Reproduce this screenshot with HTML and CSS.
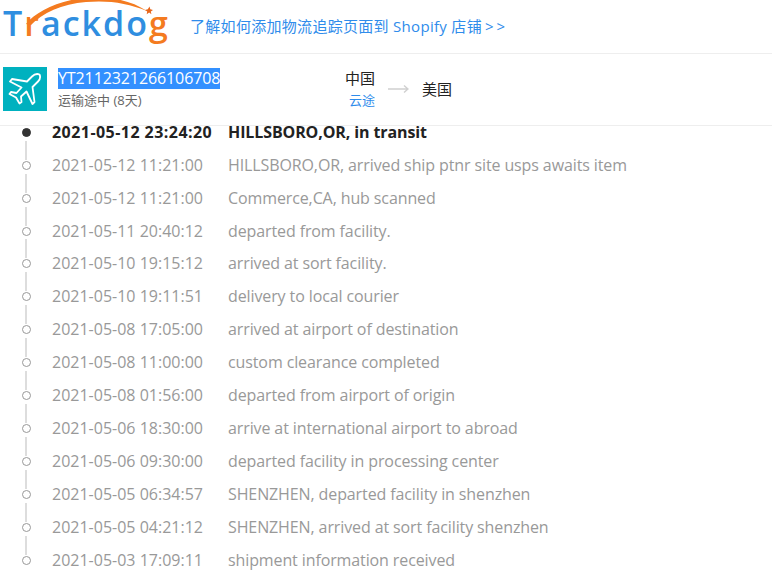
FILE: index.html
```html
<!DOCTYPE html>
<html lang="zh-CN">
<head>
    <meta charset="UTF-8">
    <title>Trackdog</title>
    <link rel="stylesheet" href="styles.css">
</head>
<body>
    <header class="top-bar">
        <div class="logo">
            <span class="logo-text">T<b>r</b>ackdo<b>g</b></span>
            <svg class="logo-arc" width="172" height="46" viewBox="0 0 172 46">
                <path d="M26 24 C36 12 56 1 84 -2 C110 -4 130 0 147 11 C128 3 108 0 86 2 C62 4 42 13 31 25 Z" fill="#f47b20"/>
                <path d="M149.500 6.500 l0.800 2.700 l2.700 0.800 l-2.200 1.400 l0.600 2.800 l-2.300 -1.700 l-2.400 1.700 l0.500 -2.800 l-2.200 -1.500 l2.800 -0.700 Z" fill="#e8661a"/>
            </svg>
        </div>
        <a class="guide-link" href="#">了解如何添加物流追踪页面到 Shopify 店铺<span class="chevrons">&gt;&gt;</span></a>
    </header>

    <section class="summary">
        <div class="plane-box">
            <svg width="34" height="34" viewBox="0 0 34 34" fill="none" stroke="#fff" stroke-width="1.8" stroke-linejoin="round">
                <path d="M31.500 2.500 C29 1.500 26 2.500 24 4.500 L19 9.500 L4 7 L2 9.500 L13.500 15.500 L8.500 21 L3 20 L1.500 22 L8 25.500 L11.500 31.500 L13.500 30 L13 24.500 L18.500 19.500 L24.500 32 L26.500 30 L24.500 15 L30 9.500 C32 7.500 32.500 4.500 31.500 2.500 Z"/>
            </svg>
        </div>
        <div class="number-block">
            <div class="number">YT2112321266106708</div>
            <div class="status">运输途中 (8天)</div>
        </div>
        <div class="route">
            <div class="route-from">
                <div>中国</div>
                <a href="#">云途</a>
            </div>
            <svg class="route-arrow" width="21" height="10" viewBox="0 0 21 10">
                <path d="M0 5 H20 M16 1.500 L20 5 L16 8.500" fill="none" stroke="#d0d0d0" stroke-width="1.500"/>
            </svg>
            <div class="route-to">美国</div>
        </div>
    </section>

    <ul class="timeline">
        <li class="event latest"><span class="time">2021-05-12 23:24:20</span><span class="desc">HILLSBORO,OR, in transit</span></li>
        <li class="event"><span class="time">2021-05-12 11:21:00</span><span class="desc">HILLSBORO,OR, arrived ship ptnr site usps awaits item</span></li>
        <li class="event"><span class="time">2021-05-12 11:21:00</span><span class="desc">Commerce,CA, hub scanned</span></li>
        <li class="event"><span class="time">2021-05-11 20:40:12</span><span class="desc">departed from facility.</span></li>
        <li class="event"><span class="time">2021-05-10 19:15:12</span><span class="desc">arrived at sort facility.</span></li>
        <li class="event"><span class="time">2021-05-10 19:11:51</span><span class="desc">delivery to local courier</span></li>
        <li class="event"><span class="time">2021-05-08 17:05:00</span><span class="desc">arrived at airport of destination</span></li>
        <li class="event"><span class="time">2021-05-08 11:00:00</span><span class="desc">custom clearance completed</span></li>
        <li class="event"><span class="time">2021-05-08 01:56:00</span><span class="desc">departed from airport of origin</span></li>
        <li class="event"><span class="time">2021-05-06 18:30:00</span><span class="desc">arrive at international airport to abroad</span></li>
        <li class="event"><span class="time">2021-05-06 09:30:00</span><span class="desc">departed facility in processing center</span></li>
        <li class="event"><span class="time">2021-05-05 06:34:57</span><span class="desc">SHENZHEN, departed facility in shenzhen</span></li>
        <li class="event"><span class="time">2021-05-05 04:21:12</span><span class="desc">SHENZHEN, arrived at sort facility shenzhen</span></li>
        <li class="event"><span class="time">2021-05-03 17:09:11</span><span class="desc">shipment information received</span></li>
    </ul>
</body>
</html>
```

FILE: styles.css
```css
html, body {
    height: 100%;
    overflow: hidden;
}
body {
    margin: 0;
    background-color: #fff;
    font-family: "Open Sans", "Noto Sans CJK SC", sans-serif;
    font-size: 15px;
    color: #333;
}
a {
    text-decoration: none;
    color: #2f8ceb;
}

.top-bar {
    display: flex;
    align-items: center;
    height: 53px;
    border-bottom: 1px solid #eee;
}
.logo {
    position: relative;
    width: 190px;
    height: 53px;
    flex-shrink: 0;
}
.logo-arc {
    position: absolute;
    left: 0;
    top: 0;
}
.logo-text {
    display: block;
    padding: 2px 0 0 3px;
    font-size: 34px;
    font-weight: 600;
    line-height: 42px;
    letter-spacing: 2px;
    white-space: nowrap;
    color: #2f8ee0;
}
.logo-text b {
    font-weight: 600;
    color: #f47b20;
}
.guide-link {
    margin-top: -2px;
    letter-spacing: 0.3px;
}
.chevrons {
    margin-left: 3px;
    letter-spacing: 3px;
}

.summary {
    display: flex;
    align-items: center;
    height: 71px;
    padding-left: 3px;
    border-bottom: 1px solid #eee;
}
.plane-box {
    display: flex;
    align-items: center;
    justify-content: center;
    width: 44px;
    height: 44px;
    margin-top: -2px;
    background-color: #00b1bf;
}
.number-block {
    width: 287px;
    margin-left: 11px;
}
.number {
    width: fit-content;
    font-size: 16px;
    line-height: 21px;
    letter-spacing: -0.1px;
    color: #fff;
    background-color: #3390ff;
}
.status {
    font-size: 13px;
    line-height: 22px;
    color: #666;
}
.route {
    display: flex;
    align-items: center;
    margin-top: -2px;
}
.route-from {
    text-align: right;
    line-height: 23px;
    color: #222;
}
.route-from a {
    display: block;
    font-size: 13px;
    line-height: 21px;
}
.route-arrow {
    margin: 0 13px;
}
.route-to {
    color: #222;
}

.timeline {
    list-style: none;
    margin: -4.3px 0 0;
    padding: 0 0 0 52px;
}
.event {
    position: relative;
    display: flex;
    height: 32.95px;
    line-height: 20px;
    font-size: 16px;
    color: #999;
}
.event::before {
    content: "";
    position: absolute;
    left: -30px;
    top: 6px;
    width: 7px;
    height: 7px;
    border: 1px solid #999;
    border-radius: 50%;
    background-color: #fff;
}
.event::after {
    content: "";
    position: absolute;
    left: -27px;
    top: -14px;
    width: 2px;
    height: 19px;
    background-color: #ddd;
}
.event.latest {
    font-weight: 700;
    color: #222;
}
.event.latest::before {
    background-color: #333;
    border-color: #333;
}
.event.latest::after {
    display: none;
}
.event.latest .time {
    letter-spacing: 0.45px;
}
.time {
    width: 176px;
    flex-shrink: 0;
}
.desc {
    letter-spacing: -0.11px;
}
```
